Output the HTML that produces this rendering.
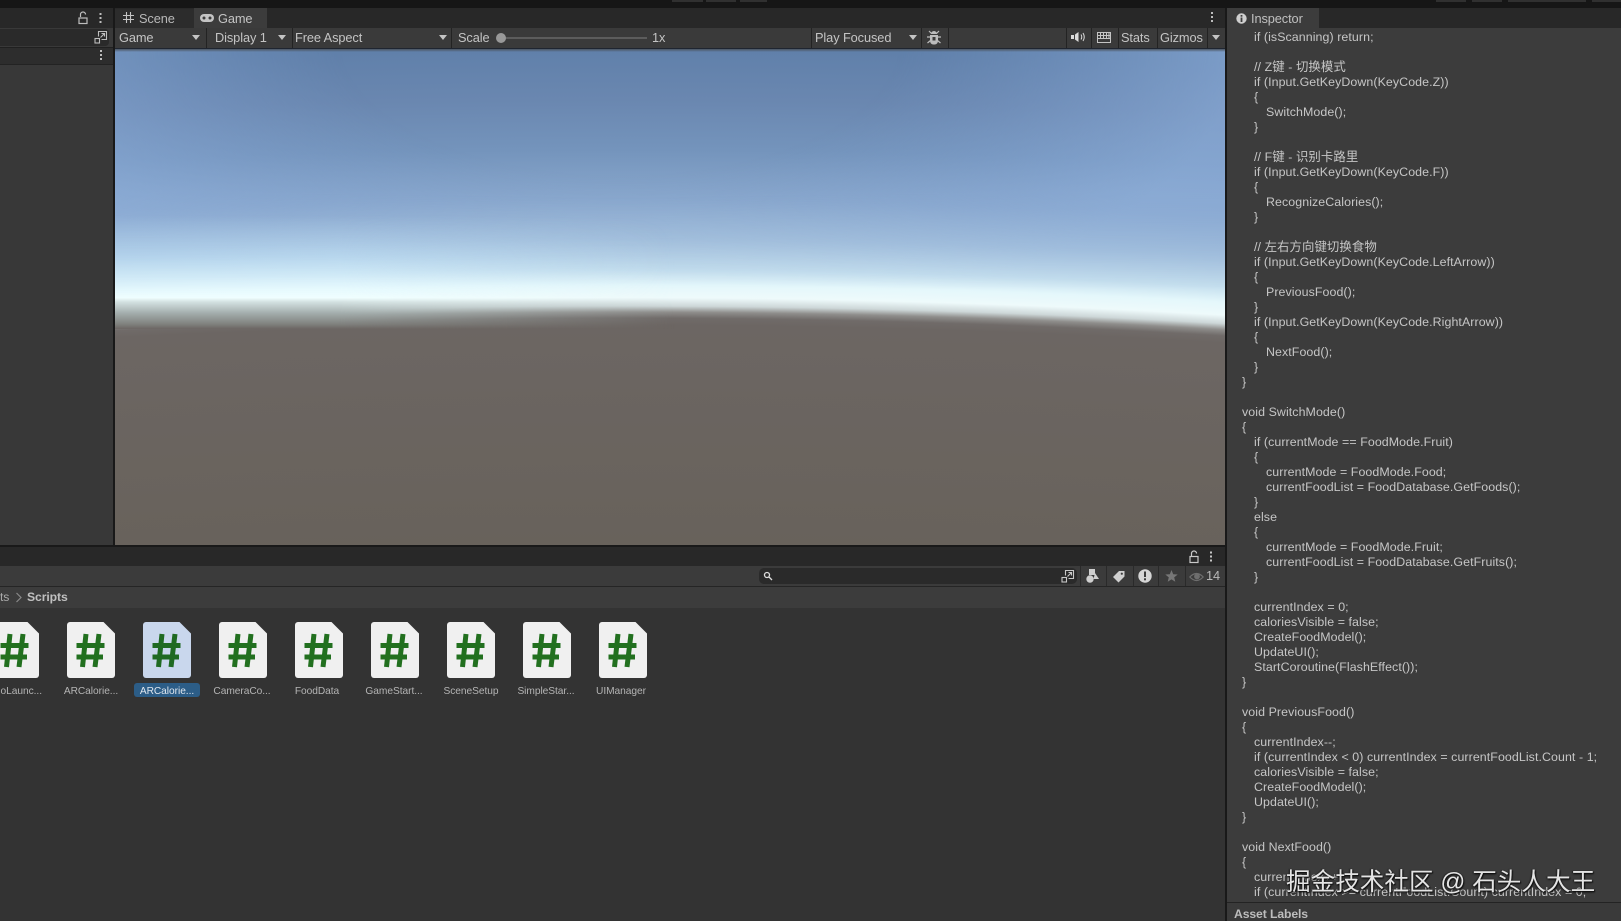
<!DOCTYPE html>
<html><head><meta charset="utf-8">
<style>
html,body{margin:0;padding:0;background:#161616;width:1621px;height:921px;overflow:hidden}
body{position:relative;font-family:"Liberation Sans","Noto Sans CJK SC",sans-serif;color:#c4c4c4;font-size:12.8px}
.a{position:absolute}
.t{position:absolute;white-space:nowrap;line-height:16px;letter-spacing:-.1px}
.sep{position:absolute;top:28px;width:1px;height:20px;background:#232323}
.arr{position:absolute;width:0;height:0;border-left:4.5px solid transparent;border-right:4.5px solid transparent;border-top:5px solid #c4c4c4;top:35px}
#code div{position:absolute;white-space:nowrap;line-height:15px;font-size:12.4px;color:#c6c6c6;letter-spacing:.08px}
.ico{position:absolute;top:622px;width:48px;height:56px}
.lb{position:absolute;top:685px;width:76px;text-align:center;font-size:10.2px;line-height:14px;color:#b4b4b4;letter-spacing:-.05px;white-space:nowrap}
</style></head><body>
<!-- top strip -->
<div class="a" style="left:0;top:0;width:1621px;height:8px;background:#161616"></div>
<div class="a" style="left:672px;top:0;width:31px;height:2px;background:#303030"></div>
<div class="a" style="left:706px;top:0;width:30px;height:2px;background:#303030"></div>
<div class="a" style="left:740px;top:0;width:27px;height:2px;background:#303030"></div>
<div class="a" style="left:1436px;top:0;width:30px;height:2px;background:#303030"></div>
<div class="a" style="left:1472px;top:0;width:30px;height:2px;background:#303030"></div>
<div class="a" style="left:1508px;top:0;width:78px;height:2px;background:#303030"></div>
<div class="a" style="left:1592px;top:0;width:29px;height:2px;background:#303030"></div>

<!-- left panel -->
<div class="a" style="left:0;top:8px;width:113px;height:20px;background:#282828"></div>
<div class="a" style="left:0;top:28px;width:113px;height:20px;background:#393939"></div>
<div class="a" style="left:0;top:29px;width:109px;height:17px;background:#2a2a2a;border-radius:0 4px 4px 0"></div>
<div class="a" style="left:0;top:47px;width:113px;height:16px;background:#2d2d2d;border-top:1px solid #202020"></div>
<div class="a" style="left:0;top:64px;width:113px;height:481px;background:#383838;border-top:1px solid #232323"></div>
<div class="a" style="left:113px;top:8px;width:2px;height:537px;background:#191919"></div>
<svg class="a" style="left:76px;top:10px" width="34" height="16" viewBox="0 0 34 16" fill="none">
<path d="M4.5 7V4.5a2.500 2.500 0 0 1 5 0" stroke="#bdbdbd" stroke-width="1.2"/><rect x="3" y="8" width="8" height="5.5" stroke="#bdbdbd" stroke-width="1.2"/>
<rect x="23.5" y="3" width="2" height="2" fill="#bdbdbd"/><rect x="23.5" y="7" width="2" height="2" fill="#bdbdbd"/><rect x="23.5" y="11" width="2" height="2" fill="#bdbdbd"/></svg>
<svg class="a" style="left:94px;top:30px" width="14" height="14" viewBox="0 0 14 14" fill="none" stroke="#bdbdbd" stroke-width="1.1">
<path d="M4.5 6.5V1.5h8v8H7.500"/><path d="M6.500 7.500l4-4M7.500 3.500h3v3"/><rect x="1" y="8.500" width="4.500" height="4.500"/></svg>
<svg class="a" style="left:100px;top:50px" width="4" height="14" fill="#bdbdbd"><rect x="0" y="0" width="2" height="2"/><rect x="0" y="4" width="2" height="2"/><rect x="0" y="8" width="2" height="2"/></svg>

<!-- center tabs -->
<div class="a" style="left:115px;top:8px;width:1110px;height:20px;background:#282828"></div>
<div class="a" style="left:115px;top:9px;width:79px;height:19px;background:#2c2c2c"></div>
<div class="a" style="left:194px;top:8px;width:73px;height:20px;background:#3c3c3c"></div>
<svg class="a" style="left:123px;top:12px" width="11" height="11" fill="none" stroke="#c4c4c4" stroke-width="1.1"><path d="M3.500 0v11M7.500 0v11M0 3.500h11M0 7.500h11"/></svg>
<div class="t" style="left:139px;top:10.500px;color:#b8b8b8">Scene</div>
<svg class="a" style="left:200px;top:14px" width="14" height="8" viewBox="0 0 14 8"><rect x="0" y="0" width="14" height="8" rx="4" fill="#c4c4c4"/><circle cx="4" cy="4" r="1.500" fill="#3c3c3c"/><circle cx="10" cy="4" r="1.500" fill="#3c3c3c"/></svg>
<div class="t" style="left:218px;top:10.500px;color:#c4c4c4">Game</div>
<svg class="a" style="left:1211px;top:12px" width="4" height="12" fill="#bdbdbd"><rect x="0" y="0" width="2" height="2"/><rect x="0" y="4" width="2" height="2"/><rect x="0" y="8" width="2" height="2"/></svg>

<!-- game toolbar -->
<div class="a" style="left:115px;top:28px;width:1110px;height:20px;background:#3a3a3a"></div>
<div class="a" style="left:115px;top:48px;width:1110px;height:1px;background:#1f2530"></div>
<div class="t" style="left:119px;top:29.500px">Game</div><div class="arr" style="left:192px"></div><div class="sep" style="left:206px"></div>
<div class="t" style="left:215px;top:29.500px">Display 1</div><div class="arr" style="left:278px"></div><div class="sep" style="left:292px"></div>
<div class="t" style="left:295px;top:29.500px">Free Aspect</div><div class="arr" style="left:439px"></div><div class="sep" style="left:451px"></div>
<div class="t" style="left:458px;top:29.500px">Scale</div>
<div class="a" style="left:500px;top:37px;width:147px;height:2px;background:#5c5c5c"></div>
<div class="a" style="left:496px;top:33px;width:10px;height:10px;border-radius:50%;background:#999"></div>
<div class="t" style="left:652px;top:29.500px">1x</div>
<div class="sep" style="left:811px"></div>
<div class="t" style="left:815px;top:29.500px">Play Focused</div><div class="arr" style="left:909px"></div><div class="sep" style="left:921px"></div>
<svg class="a" style="left:926px;top:29px" width="16" height="17" viewBox="0 0 16 17" fill="#bcbcbc"><path d="M5 5a3 3 0 0 1 6 0zM4 6h8v6a3.500 3.500 0 0 1-3 3.500H7A3.500 3.500 0 0 1 4 12z"/><path d="M3 2l2.500 2.500M13 2l-2.500 2.500M1 8h3M12 8h3M1.500 14l3-2.500M14.500 14l-3-2.500" stroke="#bcbcbc" stroke-width="1.200"/><rect x="6.500" y="8" width="3" height="3.500" fill="#3a3a3a"/></svg>
<div class="sep" style="left:948px"></div>
<div class="sep" style="left:1066px"></div>
<svg class="a" style="left:1071px;top:31px" width="15" height="12" viewBox="0 0 15 12" fill="#dcdcdc"><path d="M0 4h3v4H0zM4 3.500L7.500 1v10L4 8.500z"/><path d="M10 3.500q1.500 2.500 0 5M12 2q2.500 4 0 8" stroke="#dcdcdc" fill="none" stroke-width="1"/></svg>
<div class="sep" style="left:1091px"></div>
<svg class="a" style="left:1097px;top:32px" width="14" height="11" viewBox="0 0 14 11" fill="none" stroke="#c4c4c4" stroke-width="1"><rect x=".5" y=".5" width="13" height="10"/><path d="M.5 3.500h13M.5 6.500h13M3.500.5v6M6.500.5v6M9.500.5v6M12 .5v6"/></svg>
<div class="sep" style="left:1118px"></div>
<div class="t" style="left:1121px;top:29.500px">Stats</div>
<div class="sep" style="left:1157px"></div>
<div class="t" style="left:1160px;top:29.500px">Gizmos</div>
<div class="sep" style="left:1207px"></div><div class="arr" style="left:1212px"></div>

<!-- game view -->
<svg class="a" style="left:115px;top:49px" width="1110" height="496" viewBox="115 49 1110 496">
<defs>
<radialGradient id="g" gradientUnits="userSpaceOnUse" cx="0" cy="0" r="1" gradientTransform="translate(620 1250) scale(4000 1201)">
<stop offset=".587" stop-color="#68625b"/>
<stop offset=".77" stop-color="#6c6663"/>
<stop offset=".776" stop-color="#706b69"/>
<stop offset=".781" stop-color="#8f8e8c"/>
<stop offset=".786" stop-color="#cdd7d8"/>
<stop offset=".793" stop-color="#eefafb"/>
<stop offset=".8035" stop-color="#e4f7fb"/>
<stop offset=".816" stop-color="#c5dfee"/>
<stop offset=".841" stop-color="#a6c2dd"/>
<stop offset=".874" stop-color="#8aa8cd"/>
<stop offset=".916" stop-color="#7494bc"/>
<stop offset=".9575" stop-color="#6a87b0"/>
<stop offset="1" stop-color="#6080aa"/>
</radialGradient>
<radialGradient id="e" gradientUnits="userSpaceOnUse" cx="0" cy="0" r="1" gradientTransform="translate(620 40) scale(620 300)">
<stop offset="0" stop-color="#7fa0d0" stop-opacity="0"/>
<stop offset=".45" stop-color="#7fa0d0" stop-opacity="0"/>
<stop offset="1" stop-color="#8fb0dc" stop-opacity=".6"/>
</radialGradient>
<linearGradient id="vf" x1="0" y1="0" x2="0" y2="1"><stop offset="0" stop-color="#fff"/><stop offset=".6" stop-color="#fff"/><stop offset="1" stop-color="#000"/></linearGradient>
<mask id="m1" maskUnits="userSpaceOnUse" x="115" y="49" width="1110" height="240"><rect x="115" y="49" width="1110" height="240" fill="url(#vf)"/></mask>
<linearGradient id="lb" x1="0" y1="0" x2="0" y2="1"><stop offset="0" stop-color="#bfe0f6" stop-opacity="0"/><stop offset=".5" stop-color="#c4e6fa" stop-opacity=".45"/><stop offset="1" stop-color="#f0ffff" stop-opacity=".85"/></linearGradient>
<linearGradient id="hf" x1="0" y1="0" x2="1" y2="0"><stop offset="0" stop-color="#fff"/><stop offset=".4" stop-color="#fff"/><stop offset="1" stop-color="#000"/></linearGradient>
<mask id="m2" maskUnits="userSpaceOnUse" x="115" y="215" width="560" height="120"><rect x="115" y="215" width="560" height="120" fill="url(#hf)"/></mask>
<linearGradient id="hz" x1="0" y1="0" x2="0" y2="1"><stop offset="0" stop-color="#eefcfc"/><stop offset=".12" stop-color="#d4e2e2"/><stop offset=".5" stop-color="#a2acab"/><stop offset=".85" stop-color="#7f807d"/><stop offset="1" stop-color="#6c6663"/></linearGradient>
</defs>
<rect x="115" y="49" width="1110" height="496" fill="url(#g)"/>
<rect x="115" y="49" width="1110" height="240" fill="url(#e)" mask="url(#m1)"/>
<g mask="url(#m2)"><rect x="115" y="215" width="560" height="83" fill="url(#lb)"/><rect x="115" y="298" width="560" height="31" fill="url(#hz)"/></g>
</svg>
<div class="a" style="left:115px;top:49px;width:1110px;height:3px;background:linear-gradient(#4c5560,transparent)"></div>
<div class="a" style="left:1225px;top:8px;width:2px;height:913px;background:#191919"></div>

<!-- project window -->
<div class="a" style="left:0;top:545px;width:1225px;height:2px;background:#191919"></div>
<div class="a" style="left:0;top:547px;width:1225px;height:19px;background:#282828"></div>
<div class="a" style="left:0;top:566px;width:1225px;height:20px;background:#3b3b3b"></div>
<div class="a" style="left:0;top:586px;width:1225px;height:1px;background:#252525"></div>
<div class="a" style="left:0;top:587px;width:1225px;height:21px;background:#3c3c3c"></div>
<div class="a" style="left:0;top:608px;width:1225px;height:313px;background:#333"></div>
<svg class="a" style="left:1188px;top:549px" width="34" height="16" viewBox="0 0 34 16" fill="none">
<path d="M3.500 7V4.500a2.500 2.500 0 0 1 5 0" stroke="#c8c8c8" stroke-width="1.200"/><rect x="2" y="7.500" width="8" height="6" stroke="#c8c8c8" stroke-width="1.200"/>
<rect x="22" y="2.500" width="2" height="2" fill="#c8c8c8"/><rect x="22" y="6.500" width="2" height="2" fill="#c8c8c8"/><rect x="22" y="10.500" width="2" height="2" fill="#c8c8c8"/></svg>
<div class="a" style="left:759px;top:568px;width:318px;height:16px;background:#2a2a2a;border-radius:5px"></div>
<svg class="a" style="left:763px;top:571px" width="10" height="10" viewBox="0 0 10 10" fill="none" stroke="#ddd" stroke-width="1.300"><circle cx="4" cy="4" r="2.500"/><path d="M6 6l3 3"/></svg>
<svg class="a" style="left:1061px;top:569px" width="14" height="14" viewBox="0 0 14 14" fill="none" stroke="#c8c8c8" stroke-width="1.100"><path d="M4.500 6.500V1.500h8v8H7.500"/><path d="M6.500 7.500l4-4M7.500 3.500h3v3"/><rect x="1" y="8.500" width="4.500" height="4.500"/></svg>
<div class="a" style="left:1080px;top:566px;width:1px;height:20px;background:#2a2a2a"></div>
<svg class="a" style="left:1086px;top:569px" width="14" height="14" viewBox="0 0 14 14" fill="#cfcfcf"><rect x="3" y="0" width="6" height="6"/><circle cx="4" cy="10" r="3.700"/><path d="M9 4l4 6H7.500z"/></svg>
<div class="a" style="left:1106px;top:566px;width:1px;height:20px;background:#2a2a2a"></div>
<svg class="a" style="left:1112px;top:570px" width="14" height="13" viewBox="0 0 14 13" fill="#cfcfcf"><path d="M7 1h5.500v5.500L6.500 12.500 1 7z"/><circle cx="9.800" cy="3.700" r="1.100" fill="#3b3b3b"/></svg>
<div class="a" style="left:1133px;top:566px;width:1px;height:20px;background:#2a2a2a"></div>
<svg class="a" style="left:1138px;top:569px" width="14" height="14" viewBox="0 0 14 14"><circle cx="7" cy="7" r="6.700" fill="#d6d6d6"/><rect x="6" y="2.500" width="2" height="5.500" fill="#3b3b3b"/><rect x="6" y="9.300" width="2" height="2" fill="#3b3b3b"/></svg>
<div class="a" style="left:1158px;top:566px;width:1px;height:20px;background:#2a2a2a"></div>
<svg class="a" style="left:1165px;top:570px" width="13" height="12" viewBox="0 0 13 12" fill="#777"><path d="M6.500 0l1.700 4.200 4.500.3-3.500 2.900 1.100 4.400-3.800-2.400-3.800 2.400 1.100-4.400L.3 4.500l4.500-.3z"/></svg>
<div class="a" style="left:1185px;top:566px;width:1px;height:20px;background:#2a2a2a"></div>
<svg class="a" style="left:1189px;top:572px" width="15" height="10" viewBox="0 0 15 10" fill="none" stroke="#6e6e6e" stroke-width="1.200"><path d="M.8 5Q7.500-2 14.200 5 7.500 12 .8 5z"/><circle cx="8" cy="4.500" r="2.300" fill="#6e6e6e"/></svg>
<div class="t" style="left:1206px;top:568px;color:#b8b8b8">14</div>
<div class="t" style="left:0;top:589px;color:#aaa;font-size:12.200px">ts</div>
<svg class="a" style="left:15px;top:592px" width="8" height="11" fill="none" stroke="#8a8a8a" stroke-width="1.200"><path d="M1.500 1l4.500 4.500L1.500 10"/></svg>
<div class="t" style="left:27px;top:589px;color:#c0c0c0;font-weight:bold;font-size:12.200px">Scripts</div>

<!-- file icons -->
<svg class="ico" style="left:-9px" viewBox="0 0 48 56"><path d="M3 0H36.500L48 11.500V53a3 3 0 0 1-3 3H3a3 3 0 0 1-3-3V3a3 3 0 0 1 3-3z" fill="#f0f0f0"/><path d="M19 12L15.500 45M32 12L28 45M9.500 23.500H37.500M9.500 35H36" stroke="#22701f" stroke-width="5" fill="none"/></svg>
<svg class="ico" style="left:67px" viewBox="0 0 48 56"><path d="M3 0H36.500L48 11.500V53a3 3 0 0 1-3 3H3a3 3 0 0 1-3-3V3a3 3 0 0 1 3-3z" fill="#f0f0f0"/><path d="M19 12L15.500 45M32 12L28 45M9.500 23.500H37.500M9.500 35H36" stroke="#22701f" stroke-width="5" fill="none"/></svg>
<svg class="ico" style="left:143px" viewBox="0 0 48 56"><path d="M3 0H36.500L48 11.500V53a3 3 0 0 1-3 3H3a3 3 0 0 1-3-3V3a3 3 0 0 1 3-3z" fill="#c9d7ed"/><path d="M19 12L15.500 45M32 12L28 45M9.500 23.500H37.500M9.500 35H36" stroke="#1f6a22" stroke-width="5" fill="none"/></svg>
<svg class="ico" style="left:219px" viewBox="0 0 48 56"><path d="M3 0H36.500L48 11.500V53a3 3 0 0 1-3 3H3a3 3 0 0 1-3-3V3a3 3 0 0 1 3-3z" fill="#f0f0f0"/><path d="M19 12L15.500 45M32 12L28 45M9.500 23.500H37.500M9.500 35H36" stroke="#22701f" stroke-width="5" fill="none"/></svg>
<svg class="ico" style="left:295px" viewBox="0 0 48 56"><path d="M3 0H36.500L48 11.500V53a3 3 0 0 1-3 3H3a3 3 0 0 1-3-3V3a3 3 0 0 1 3-3z" fill="#f0f0f0"/><path d="M19 12L15.500 45M32 12L28 45M9.500 23.500H37.500M9.500 35H36" stroke="#22701f" stroke-width="5" fill="none"/></svg>
<svg class="ico" style="left:371px" viewBox="0 0 48 56"><path d="M3 0H36.500L48 11.500V53a3 3 0 0 1-3 3H3a3 3 0 0 1-3-3V3a3 3 0 0 1 3-3z" fill="#f0f0f0"/><path d="M19 12L15.500 45M32 12L28 45M9.500 23.500H37.500M9.500 35H36" stroke="#22701f" stroke-width="5" fill="none"/></svg>
<svg class="ico" style="left:447px" viewBox="0 0 48 56"><path d="M3 0H36.500L48 11.500V53a3 3 0 0 1-3 3H3a3 3 0 0 1-3-3V3a3 3 0 0 1 3-3z" fill="#f0f0f0"/><path d="M19 12L15.500 45M32 12L28 45M9.500 23.500H37.500M9.500 35H36" stroke="#22701f" stroke-width="5" fill="none"/></svg>
<svg class="ico" style="left:523px" viewBox="0 0 48 56"><path d="M3 0H36.500L48 11.500V53a3 3 0 0 1-3 3H3a3 3 0 0 1-3-3V3a3 3 0 0 1 3-3z" fill="#f0f0f0"/><path d="M19 12L15.500 45M32 12L28 45M9.500 23.500H37.500M9.500 35H36" stroke="#22701f" stroke-width="5" fill="none"/></svg>
<svg class="ico" style="left:599px" viewBox="0 0 48 56"><path d="M3 0H36.500L48 11.500V53a3 3 0 0 1-3 3H3a3 3 0 0 1-3-3V3a3 3 0 0 1 3-3z" fill="#f0f0f0"/><path d="M19 12L15.500 45M32 12L28 45M9.500 23.500H37.500M9.500 35H36" stroke="#22701f" stroke-width="5" fill="none"/></svg>
<div class="a" style="left:134px;top:683px;width:66px;height:14px;background:#2c5d87;border-radius:3px"></div>
<div class="lb" style="left:-16px;text-align:right;width:58px">oLaunc...</div>
<div class="lb" style="left:53px">ARCalorie...</div>
<div class="lb" style="left:129px;color:#dfe6ee">ARCalorie...</div>
<div class="lb" style="left:204px">CameraCo...</div>
<div class="lb" style="left:279px">FoodData</div>
<div class="lb" style="left:356px">GameStart...</div>
<div class="lb" style="left:433px">SceneSetup</div>
<div class="lb" style="left:508px">SimpleStar...</div>
<div class="lb" style="left:583px">UIManager</div>

<!-- inspector -->
<div class="a" style="left:1227px;top:8px;width:394px;height:20px;background:#282828"></div>
<div class="a" style="left:1227px;top:8px;width:92px;height:20px;background:#3c3c3c"></div>
<div class="a" style="left:1227px;top:28px;width:394px;height:874px;background:#3c3c3c"></div>
<svg class="a" style="left:1236px;top:13px" width="11" height="11" viewBox="0 0 11 11"><circle cx="5.500" cy="5.500" r="5.200" fill="#cfcfcf"/><rect x="4.600" y="2" width="1.800" height="1.700" fill="#3c3c3c"/><rect x="4.600" y="4.500" width="1.800" height="4.500" fill="#3c3c3c"/></svg>
<div class="t" style="left:1251px;top:10.500px;color:#c0c0c0">Inspector</div>
<div id="code" style="position:absolute;left:0;top:1px">
<div style="left:1254px;top:29px">if (isScanning) return;</div>
<div style="left:1254px;top:59px">// Z键 - 切换模式</div>
<div style="left:1254px;top:74px">if (Input.GetKeyDown(KeyCode.Z))</div>
<div style="left:1254px;top:89px">{</div>
<div style="left:1266px;top:104px">SwitchMode();</div>
<div style="left:1254px;top:119px">}</div>
<div style="left:1254px;top:149px">// F键 - 识别卡路里</div>
<div style="left:1254px;top:164px">if (Input.GetKeyDown(KeyCode.F))</div>
<div style="left:1254px;top:179px">{</div>
<div style="left:1266px;top:194px">RecognizeCalories();</div>
<div style="left:1254px;top:209px">}</div>
<div style="left:1254px;top:239px">// 左右方向键切换食物</div>
<div style="left:1254px;top:254px">if (Input.GetKeyDown(KeyCode.LeftArrow))</div>
<div style="left:1254px;top:269px">{</div>
<div style="left:1266px;top:284px">PreviousFood();</div>
<div style="left:1254px;top:299px">}</div>
<div style="left:1254px;top:314px">if (Input.GetKeyDown(KeyCode.RightArrow))</div>
<div style="left:1254px;top:329px">{</div>
<div style="left:1266px;top:344px">NextFood();</div>
<div style="left:1254px;top:359px">}</div>
<div style="left:1242px;top:374px">}</div>
<div style="left:1242px;top:404px">void SwitchMode()</div>
<div style="left:1242px;top:419px">{</div>
<div style="left:1254px;top:434px">if (currentMode == FoodMode.Fruit)</div>
<div style="left:1254px;top:449px">{</div>
<div style="left:1266px;top:464px">currentMode = FoodMode.Food;</div>
<div style="left:1266px;top:479px">currentFoodList = FoodDatabase.GetFoods();</div>
<div style="left:1254px;top:494px">}</div>
<div style="left:1254px;top:509px">else</div>
<div style="left:1254px;top:524px">{</div>
<div style="left:1266px;top:539px">currentMode = FoodMode.Fruit;</div>
<div style="left:1266px;top:554px">currentFoodList = FoodDatabase.GetFruits();</div>
<div style="left:1254px;top:569px">}</div>
<div style="left:1254px;top:599px">currentIndex = 0;</div>
<div style="left:1254px;top:614px">caloriesVisible = false;</div>
<div style="left:1254px;top:629px">CreateFoodModel();</div>
<div style="left:1254px;top:644px">UpdateUI();</div>
<div style="left:1254px;top:659px">StartCoroutine(FlashEffect());</div>
<div style="left:1242px;top:674px">}</div>
<div style="left:1242px;top:704px">void PreviousFood()</div>
<div style="left:1242px;top:719px">{</div>
<div style="left:1254px;top:734px">currentIndex--;</div>
<div style="left:1254px;top:749px">if (currentIndex &lt; 0) currentIndex = currentFoodList.Count - 1;</div>
<div style="left:1254px;top:764px">caloriesVisible = false;</div>
<div style="left:1254px;top:779px">CreateFoodModel();</div>
<div style="left:1254px;top:794px">UpdateUI();</div>
<div style="left:1242px;top:809px">}</div>
<div style="left:1242px;top:839px">void NextFood()</div>
<div style="left:1242px;top:854px">{</div>
<div style="left:1254px;top:869px">currentIndex++;</div>
<div style="left:1254px;top:884px">if (currentIndex &gt;= currentFoodList.Count) currentIndex = 0;</div>
</div>
<div class="a" style="left:1227px;top:902px;width:394px;height:1px;background:#232323"></div>
<div class="a" style="left:1227px;top:903px;width:394px;height:18px;background:#3a3a3a"></div>
<div class="t" style="left:1234px;top:906px;font-weight:bold;font-size:12.200px;color:#bdbdbd">Asset Labels</div>
<div class="a" style="left:1286px;top:867px;white-space:nowrap;font-size:24.600px;line-height:32px;color:#e4e4e4;text-shadow:1px 1px 1px #111,-1px 0 1px #222,0 1px 2px #111;font-family:'Liberation Sans','Noto Sans CJK SC',sans-serif">掘金技术社区 @ 石头人大王</div>
</body></html>
